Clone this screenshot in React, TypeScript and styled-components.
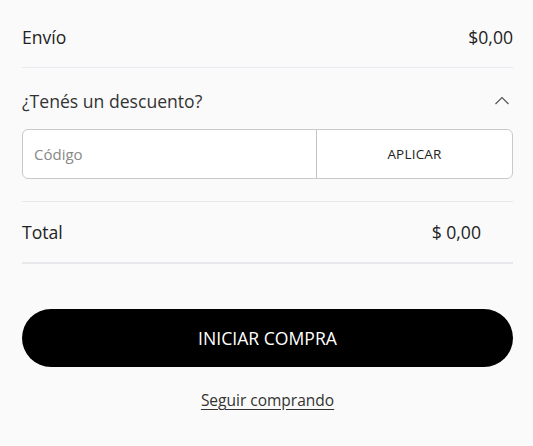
import styled, { createGlobalStyle } from "styled-components"

const GlobalStyle = createGlobalStyle`
    html, body {
        margin: 0;
        background: #fafafa;
    }
    body {
        font-family: "Open Sans", "Noto Sans", sans-serif;
        color: #222;
    }
`

const Summary = styled.section`
    padding: 0 20px 0 22px;
    display: flex;
    flex-direction: column;
`

const Row = styled.div<{ $thick?: boolean }>`
    display: flex;
    justify-content: space-between;
    align-items: center;
    height: ${p => (p.$thick ? "62px" : "68px")};
    padding-top: ${p => (p.$thick ? "0" : "6px")};
    box-sizing: border-box;
    border-bottom: ${p => (p.$thick ? "2px solid #e6e8eb" : "1px solid #e6e9ee")};
    font-size: 17.6px;
`

const Amount = styled.span<{ $inset?: boolean }>`
    margin-right: ${p => (p.$inset ? "32px" : "0")};
`

const DiscountHead = styled.div`
    display: flex;
    justify-content: space-between;
    align-items: center;
    height: 61px;
    padding-top: 4px;
    box-sizing: border-box;
    font-size: 17.6px;
    color: #333;
`

const Chevron = styled.svg`
    width: 16px;
    height: 9px;
    margin-right: 3px;
`

const CodeForm = styled.div`
    display: flex;
    height: 50px;
    border: 1px solid #c9c9c9;
    border-radius: 6px;
    background: #fff;
    overflow: hidden;
    box-sizing: border-box;
    margin-bottom: 22px;
`

const CodeInput = styled.input`
    flex: 0 0 294px;
    box-sizing: border-box;
    min-width: 0;
    border: none;
    border-right: 1px solid #c4c4c4;
    padding: 0 11px;
    font-family: inherit;
    font-size: 15px;
    color: #333;
    background: transparent;
    outline: none;
    &::placeholder {
        color: #888;
    }
`

const ApplyButton = styled.button`
    flex: 1;
    border: none;
    background: transparent;
    font-family: inherit;
    font-size: 13.5px;
    color: #222;
    letter-spacing: 0.2px;
`

const TotalBlock = styled.div`
    border-top: 1px solid #e6e8eb;
`

const CheckoutButton = styled.button`
    margin-top: 45px;
    height: 58px;
    width: 100%;
    border: none;
    border-radius: 29px;
    background: #000;
    color: #fff;
    font-family: inherit;
    font-size: 17.6px;
`

const KeepShopping = styled.a`
    align-self: center;
    margin-top: 22px;
    font-size: 15.5px;
    color: #333;
    text-decoration: underline;
    text-underline-offset: 3px;
`

export default function App() {
    return (
        <>
            <GlobalStyle />
            <Summary>
                <Row>
                    <span>Envío</span>
                    <Amount>$0,00</Amount>
                </Row>
                <DiscountHead>
                    <span>¿Tenés un descuento?</span>
                    <Chevron viewBox="0 0 16 9" fill="none" stroke="#555" strokeWidth="1.2">
                        <path d="M1.5 8 L8 1.5 L14.5 8" />
                    </Chevron>
                </DiscountHead>
                <CodeForm>
                    <CodeInput placeholder="Código" />
                    <ApplyButton>APLICAR</ApplyButton>
                </CodeForm>
                <TotalBlock>
                    <Row $thick>
                        <span>Total</span>
                        <Amount $inset>$ 0,00</Amount>
                    </Row>
                </TotalBlock>
                <CheckoutButton>INICIAR COMPRA</CheckoutButton>
                <KeepShopping href="#">Seguir comprando</KeepShopping>
            </Summary>
        </>
    )
}
